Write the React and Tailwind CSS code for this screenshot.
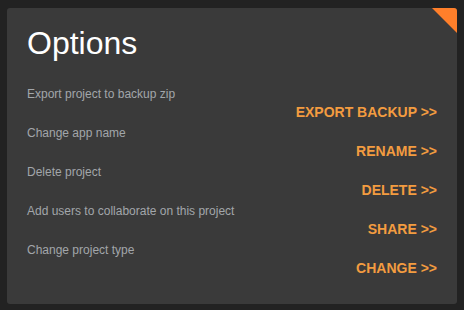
const rows = [
  ["Export project to backup zip", "EXPORT BACKUP >>"],
  ["Change app name", "RENAME >>"],
  ["Delete project", "DELETE >>"],
  ["Add users to collaborate on this project", "SHARE >>"],
  ["Change project type", "CHANGE >>"],
];

export default function App() {
  return (
    <div className="h-[310px] w-[464px] bg-[#222222] pl-[7px] pt-[8px] font-['Liberation_Sans',Arial,sans-serif]">
      <div className="relative h-[296px] w-[450px] overflow-hidden rounded-[3px] bg-[#3a3a3a] pl-[20px] pr-[20px]">
        <div className="absolute right-0 top-0 h-0 w-0 border-l-[25px] border-t-[25px] border-l-transparent border-t-[#ff7f2a]" />
        <h1 className="pt-[17px] text-[32px] leading-[37px] text-white">Options</h1>
        <div className="mt-[25px] flex flex-col">
          {rows.map(([label, action]) => (
            <div key={action} className="h-[39px]">
              <p className="text-[12px] leading-[14px] text-[#a2a6aa]">{label}</p>
              <p className="mt-[2px] text-right text-[14px] font-bold leading-[18px] text-[#f39c40]">{action}</p>
            </div>
          ))}
        </div>
      </div>
    </div>
  );
}
